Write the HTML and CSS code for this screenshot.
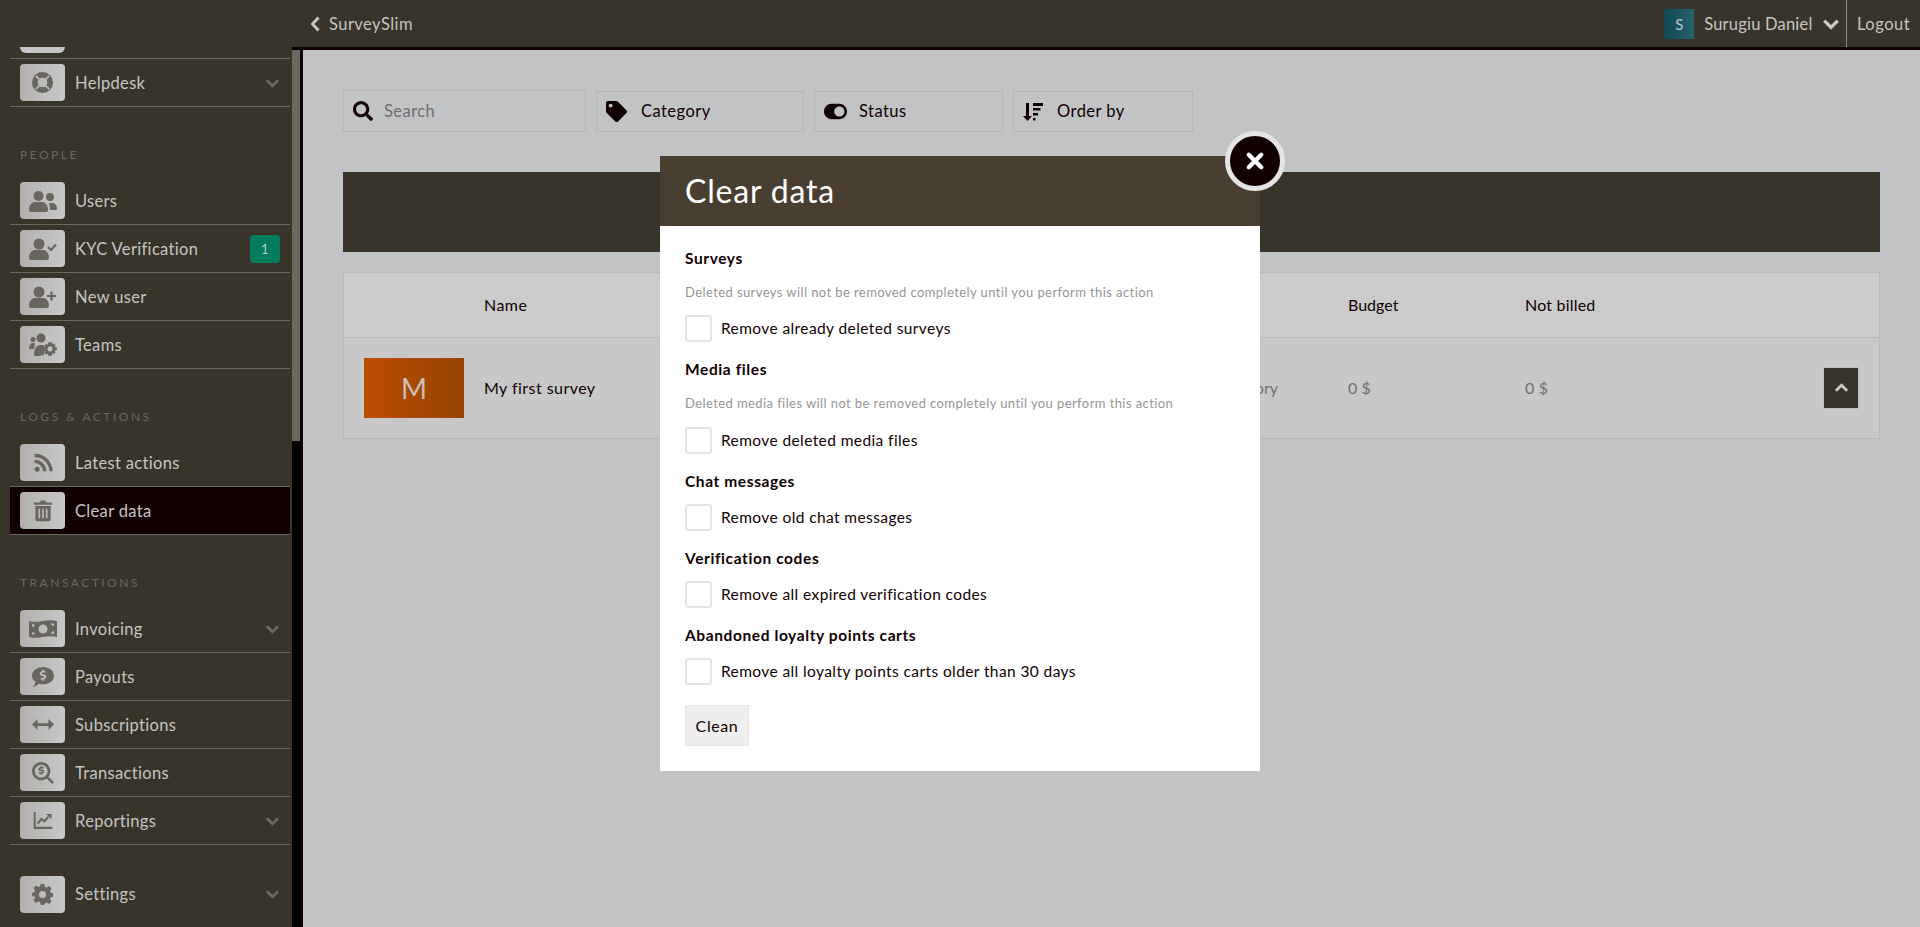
FILE: index.html
```html
<!DOCTYPE html>
<html lang="en">
<head>
<meta charset="utf-8">
<title>SurveySlim</title>
<link rel="stylesheet" href="styles.css">
</head>
<body>
<svg class="sprite" aria-hidden="true">
  <symbol id="chev" viewBox="0 0 16 10"><path d="M2 2l6 6 6-6" fill="none" stroke="currentColor" stroke-width="3"/></symbol>
  <symbol id="chevleft" viewBox="0 0 10 16"><path d="M8.500 1.500L2.500 8l6 6.500" fill="none" stroke="currentColor" stroke-width="3"/></symbol>
  <symbol id="search" viewBox="0 0 512 512"><path d="M505 442.7L405.3 343c-4.5-4.5-10.6-7-17-7H372c27.6-35.3 44-79.7 44-128C416 93.1 322.9 0 208 0S0 93.1 0 208s93.1 208 208 208c48.3 0 92.7-16.4 128-44v16.3c0 6.4 2.5 12.5 7 17l99.7 99.7c9.4 9.4 24.6 9.4 33.9 0l28.3-28.3c9.4-9.4 9.4-24.6.1-34zM208 336c-70.7 0-128-57.2-128-128 0-70.7 57.2-128 128-128 70.7 0 128 57.2 128 128 0 70.7-57.2 128-128 128z"/></symbol>
  <symbol id="tag" viewBox="0 0 512 512"><path d="M0 252.118V48C0 21.49 21.49 0 48 0h204.118a48 48 0 0 1 33.941 14.059l211.882 211.882c18.745 18.745 18.745 49.137 0 67.882L293.823 497.941c-18.745 18.745-49.137 18.745-67.882 0L14.059 286.059A48 48 0 0 1 0 252.118zM112 64c-26.51 0-48 21.49-48 48s21.49 48 48 48 48-21.49 48-48-21.49-48-48-48z"/></symbol>
  <symbol id="toggle" viewBox="0 0 576 512"><path d="M384 64H192C86 64 0 150 0 256s86 192 192 192h192c106 0 192-86 192-192S490 64 384 64zm0 320c-70.8 0-128-57.3-128-128 0-70.8 57.3-128 128-128 70.8 0 128 57.3 128 128 0 70.8-57.3 128-128 128z"/></symbol>
  <symbol id="sort" viewBox="0 0 20 18"><path d="M3 0h3v13h3l-4.500 5L0 13h3zM10 0h10v3H10zM10 5h7.500v2.500H10zM10 10h5v2.500h-5zM10 15h2.500v2.500H10z"/></symbol>
  <symbol id="lifering" viewBox="0 0 24 24"><path fill-rule="evenodd" d="M12 1a11 11 0 1 0 0 22 11 11 0 0 0 0-22zM12 7a5 5 0 1 1 0 10 5 5 0 0 1 0-10z"/><path d="M5 5l3.500 3.500M19 5l-3.500 3.500M5 19l3.500-3.500M19 19l-3.500-3.500" fill="none" stroke="#bdbdbc" stroke-width="1.800"/></symbol>
  <symbol id="users" viewBox="0 0 28 22"><circle cx="9.500" cy="6" r="5"/><path d="M0 20c0-5 3-8 6-8h7c3 0 6 3 6 8 0 1-1 2-2 2H2c-1 0-2-1-2-2z"/><circle cx="21" cy="7" r="4"/><path d="M20 13h3c3 0 5 2 5 5.500 0 1-.5 1.500-1.500 1.500H21c0-3-.5-5-1-7z"/></symbol>
  <symbol id="ucheck" viewBox="0 0 28 22"><circle cx="10" cy="6" r="5.500"/><path d="M0 20c0-5 3-8 6-8h8c3 0 6 3 6 8 0 1-1 2-2 2H2c-1 0-2-1-2-2z"/><path d="M19 9l3 3 5-5.500" fill="none" stroke="currentColor" stroke-width="2.200"/></symbol>
  <symbol id="uplus" viewBox="0 0 28 22"><circle cx="10" cy="6" r="5.500"/><path d="M0 20c0-5 3-8 6-8h8c3 0 6 3 6 8 0 1-1 2-2 2H2c-1 0-2-1-2-2z"/><path d="M18 10h9M22.500 5.500v9" fill="none" stroke="currentColor" stroke-width="2.200"/></symbol>
  <symbol id="teams" viewBox="0 0 28 24"><circle cx="12" cy="5" r="4.500"/><circle cx="4" cy="6.500" r="2.500"/><path d="M0 15c0-3 2-5 4-5h2l-1 6H1c-.5 0-1-.5-1-1zM5 21c0-5 3-9 6-9h3c1 1 2 2 2 3l-1 7c-3 1-7 1-9 1-.5 0-1-1-1-2z"/><path fill-rule="evenodd" d="M21 9l2 .5.300 1.700 1.700-.7 1.500 1.700-1 1.500 2.500 1v2l-2.500 1 1 1.500-1.500 1.700-1.700-.7L23 22.500l-2 .5-2-.5-.300-1.800-1.700.7-1.500-1.700 1-1.500-2.500-1v-2l2.500-1-1-1.500 1.500-1.700 1.700.7.300-1.700zM21 13.500a2.500 2.500 0 1 0 0 5 2.500 2.500 0 0 0 0-5z"/></symbol>
  <symbol id="rss" viewBox="0 0 24 24"><circle cx="5" cy="19.500" r="3"/><path d="M2 10a12 12 0 0 1 12 12M2 3a19 19 0 0 1 19.500 19" fill="none" stroke="currentColor" stroke-width="4"/></symbol>
  <symbol id="trash" viewBox="0 0 20 24"><path fill-rule="evenodd" d="M0 3h6.500l1-2h5l1 2H20v2.500H0zM1.500 7h17v15a2 2 0 0 1-2 2h-13a2 2 0 0 1-2-2zM5 10v10.500h1.800V10zM9.100 10v10.500h1.800V10zM13.200 10v10.500H15V10z"/></symbol>
  <symbol id="money" viewBox="0 0 28 22"><path fill-rule="evenodd" d="M0 3c9 3 18-3 28 0v16c-10-3-19 3-28 0zM14 6.500a4.500 4.500 0 1 0 0 9 4.500 4.500 0 0 0 0-9zM3 6v3a3 3 0 0 0 3-2.500zM25 16v-3a3 3 0 0 0-3 2.500zM3 16.500c1 0 2.500 0 3 .2A3 3 0 0 0 3 14zM25 5.500c-1 0-2.500 0-3-.2a3 3 0 0 0 3 2.700z"/></symbol>
  <symbol id="payout" viewBox="0 0 24 24"><path fill-rule="evenodd" d="M12 1c6.500 0 12 4 12 9.500S18.500 20 12 20c-1.500 0-3-.2-4.500-.7C6 21 3 22.500 1 22.500c1-1 2.500-3 3-5C1.500 15.500 0 13 0 10.500 0 5 5.500 1 12 1zM11 4v1.500C9.500 6 8.500 7 8.500 8.300c0 1.500 1 2.300 2.500 2.700l1.500.4c.6.200.9.500.9.900 0 .5-.5.800-1.100.8H9.500v1.700H11V16h2v-1.300c1.500-.4 2.500-1.400 2.500-2.700 0-1.500-1-2.300-2.500-2.700l-1.500-.4c-.6-.2-.9-.5-.9-.9 0-.5.500-.8 1.100-.8h2.800V5.500H13V4z"/></symbol>
  <symbol id="arrows" viewBox="0 0 24 12"><path d="M6 0v4.500h12V0l6 6-6 6V7.500H6V12L0 6z"/></symbol>
  <symbol id="searchd" viewBox="0 0 24 24"><path fill-rule="evenodd" d="M10 0a10 10 0 0 1 8 16l6 6-2 2-6-6a10 10 0 1 1-6-18zM10 3a7 7 0 1 0 0 14 7 7 0 0 0 0-14z"/><path d="M9 4.500h2v1h1.800v1.700H9.500c-.3 0-.5.200-.5.500s.2.500.5.500h1.500c1.300 0 2.200 1 2.200 2.200 0 1-.7 1.800-2.200 2.100v1H9v-1H7.200v-1.700h3.300c.3 0 .5-.2.500-.5s-.2-.5-.5-.5H9c-1.300 0-2.200-1-2.200-2.200 0-1 .7-1.700 2.200-2z"/></symbol>
  <symbol id="chart" viewBox="0 0 24 22"><path d="M0 0h2.500v19H24v3H0z"/><path d="M5 15l5-6 4 3 5-6" fill="none" stroke="currentColor" stroke-width="2.800"/><path d="M16 2.500h7v7z"/></symbol>
  <symbol id="cog" viewBox="0 0 24 24"><path fill-rule="evenodd" d="M10 0h4l.7 3.300 2 .8 2.800-1.800 2.800 2.800-1.800 2.800.8 2 3 .7v4l-3 .7-.8 2 1.800 2.800-2.800 2.800-2.800-1.800-2 .8L14 24h-4l-.7-3.300-2-.8-2.800 1.800-2.800-2.800 1.800-2.800-.8-2L0 14v-4l2.700-.7.800-2-1.800-2.800 2.800-2.800 2.800 1.800 2-.8zM12 8a4 4 0 1 0 0 8 4 4 0 0 0 0-8z"/></symbol>
</svg>

<header class="topbar">
  <a class="back"><svg class="back-icon"><use href="#chevleft"/></svg>SurveySlim</a>
  <div class="account">
    <span class="avatar">S</span>
    <span class="account-name">Surugiu Daniel</span>
    <svg class="account-chev"><use href="#chev"/></svg>
  </div>
  <a class="logout">Logout</a>
</header>

<div class="shell">
  <aside class="sidebar">
    <div class="nav-clip"><span class="nav-clip-icon"></span></div>
    <a class="nav-item"><span class="nav-icon"><svg class="i-lifering"><use href="#lifering"/></svg></span><span class="nav-text">Helpdesk</span><svg class="nav-chev"><use href="#chev"/></svg></a>

    <h4 class="nav-title">PEOPLE</h4>
    <a class="nav-item"><span class="nav-icon"><svg class="i-user"><use href="#users"/></svg></span><span class="nav-text">Users</span></a>
    <a class="nav-item"><span class="nav-icon"><svg class="i-user"><use href="#ucheck"/></svg></span><span class="nav-text">KYC Verification</span><span class="badge">1</span></a>
    <a class="nav-item"><span class="nav-icon"><svg class="i-user"><use href="#uplus"/></svg></span><span class="nav-text">New user</span></a>
    <a class="nav-item"><span class="nav-icon"><svg class="i-teams"><use href="#teams"/></svg></span><span class="nav-text">Teams</span></a>

    <h4 class="nav-title">LOGS &amp; ACTIONS</h4>
    <a class="nav-item"><span class="nav-icon"><svg class="i-rss"><use href="#rss"/></svg></span><span class="nav-text">Latest actions</span></a>
    <a class="nav-item is-active"><span class="nav-icon"><svg class="i-trash"><use href="#trash"/></svg></span><span class="nav-text">Clear data</span></a>

    <h4 class="nav-title">TRANSACTIONS</h4>
    <a class="nav-item"><span class="nav-icon"><svg class="i-user"><use href="#money"/></svg></span><span class="nav-text">Invoicing</span><svg class="nav-chev"><use href="#chev"/></svg></a>
    <a class="nav-item"><span class="nav-icon"><svg class="i-pay"><use href="#payout"/></svg></span><span class="nav-text">Payouts</span></a>
    <a class="nav-item"><span class="nav-icon"><svg class="i-arrows"><use href="#arrows"/></svg></span><span class="nav-text">Subscriptions</span></a>
    <a class="nav-item"><span class="nav-icon"><svg class="i-pay"><use href="#searchd"/></svg></span><span class="nav-text">Transactions</span></a>
    <a class="nav-item"><span class="nav-icon"><svg class="i-chart"><use href="#chart"/></svg></span><span class="nav-text">Reportings</span><svg class="nav-chev"><use href="#chev"/></svg></a>
    <a class="nav-item nav-settings"><span class="nav-icon"><svg class="i-cog"><use href="#cog"/></svg></span><span class="nav-text">Settings</span><svg class="nav-chev"><use href="#chev"/></svg></a>
  </aside>

  <div class="scrollbar"><div class="scroll-thumb"></div></div>

  <main class="main">
    <div class="filters">
      <div class="filter filter-search"><svg class="f-search"><use href="#search"/></svg><span class="placeholder">Search</span></div>
      <div class="filter filter-cat"><svg class="f-tag"><use href="#tag"/></svg><span>Category</span></div>
      <div class="filter filter-status"><svg class="f-toggle"><use href="#toggle"/></svg><span>Status</span></div>
      <div class="filter filter-order"><svg class="f-sort"><use href="#sort"/></svg><span>Order by</span></div>
    </div>
    <div class="band"></div>
    <div class="table">
      <div class="row row-head">
        <span class="c-thumb"></span><span class="c-name">Name</span><span class="c-cat"></span><span class="c-budget">Budget</span><span class="c-bill">Not billed</span>
      </div>
      <div class="row row-body">
        <span class="c-thumb"><span class="thumb">M</span></span>
        <span class="c-name">My first survey</span>
        <span class="c-cat muted">Category</span>
        <span class="c-budget muted">0 $</span>
        <span class="c-bill muted">0 $</span>
        <button class="row-btn"><svg class="row-chev"><use href="#chev"/></svg></button>
      </div>
    </div>
  </main>
</div>

<section class="modal">
  <h2 class="modal-title">Clear data</h2>
  <a class="modal-close"><svg viewBox="0 0 16 16" class="close-x"><path d="M3 3l10 10M13 3L3 13"/></svg></a>
  <form class="modal-body">
    <h5 class="g-title">Surveys</h5>
    <p class="g-desc">Deleted surveys will not be removed completely until you perform this action</p>
    <label class="check"><span class="box"></span>Remove already deleted surveys</label>
    <h5 class="g-title">Media files</h5>
    <p class="g-desc">Deleted media files will not be removed completely until you perform this action</p>
    <label class="check"><span class="box"></span>Remove deleted media files</label>
    <h5 class="g-title">Chat messages</h5>
    <label class="check"><span class="box"></span>Remove old chat messages</label>
    <h5 class="g-title">Verification codes</h5>
    <label class="check"><span class="box"></span>Remove all expired verification codes</label>
    <h5 class="g-title">Abandoned loyalty points carts</h5>
    <label class="check"><span class="box"></span>Remove all loyalty points carts older than 30 days</label>
    <button class="clean" type="button">Clean</button>
  </form>
</section>
</body>
</html>
```
FILE: styles.css
```css
* { box-sizing: border-box; }
html, body { margin: 0; height: 100%; overflow: hidden; }
body { font-family: Lato, "Noto Sans", sans-serif; font-size: 16px; background: #c2c3c5; color: #100002; display: flex; flex-direction: column; }
.sprite { display: none; }
svg { fill: currentColor; display: block; flex: none; }

.topbar { height: 47px; flex: none; background: #38342a; color: #c5c4c1; display: flex; align-items: center; padding-left: 310px; font-size: 16.500px; }
.back { display: flex; align-items: center; gap: 9px; margin-right: auto; letter-spacing: .45px; }
.back-icon { width: 10px; height: 16px; }
.account { display: flex; align-items: center; height: 47px; }
.avatar { width: 30px; height: 30px; background: linear-gradient(90deg, #0e4655, #27646e); color: #bfc5c5; display: flex; align-items: center; justify-content: center; font-size: 15px; }
.account-name { margin-left: 10px; letter-spacing: .2px; }
.account-chev { width: 18px; height: 12px; margin: 0 6.500px 0 9px; color: #c9c8c5; }
.logout { height: 47px; border-left: 1px solid #8c8b86; display: flex; align-items: center; width: 74px; padding-left: 10px; letter-spacing: .5px; }

.shell { flex: 1; display: flex; min-height: 0; }
.sidebar { width: 292px; flex: none; background: #38342a; padding: 0 2px 0 10px; overflow: hidden; color: #c5c4c1; }
.scrollbar { width: 8px; flex: none; background: #000; }
.scroll-thumb { height: 391px; margin-top: 3px; background: #6b6860; }
.nav-clip { height: 12px; border-bottom: 1px solid #6b6860; padding-left: 10px; }
.nav-clip-icon { display: block; width: 45px; height: 6px; background: #c5c5c5; border-radius: 0 0 6px 6px; }
.nav-item { height: 48px; display: flex; align-items: center; padding: 0 10px; border-bottom: 1px solid #6b6860; font-size: 16.500px; letter-spacing: .33px; }
.nav-icon { width: 45px; height: 37px; border-radius: 4px; background: linear-gradient(90deg, #b1b0ae, #c8c8c8); color: #696660; display: flex; align-items: center; justify-content: center; flex: none; }
.nav-text { margin-left: 10px; flex: 1; }
.nav-chev { width: 15px; height: 10px; color: #6b6860; }
.is-active { background: #100002; }
.nav-settings { border-bottom: 0; margin-top: 25px; }
.badge { width: 30px; height: 28px; background: #017d5e; color: #c5c9c5; border-radius: 4px; display: flex; align-items: center; justify-content: center; font-size: 13px; }
.nav-title { margin: 0; height: 70px; padding: 40px 0 0 10px; font-size: 12px; line-height: 16px; font-weight: 400; letter-spacing: 2.500px; color: #6b6860; }
.i-lifering { width: 23px; height: 23px; }
.i-user { width: 28px; height: 22px; }
.i-teams { width: 28px; height: 24px; }
.i-rss { width: 20px; height: 20px; }
.i-trash { width: 18px; height: 23px; }
.i-pay { width: 22px; height: 22px; }
.i-arrows { width: 22px; height: 11px; }
.i-chart { width: 22px; height: 17px; }
.i-cog { width: 21px; height: 21px; }

.main { flex: 1; min-width: 0; border-top: 3px solid #100002; border-left: 3px solid #100002; padding: 40px 40px 0; }
.filters { display: flex; gap: 10px; height: 42px; align-items: flex-end; }
.filter { height: 41px; border: 1px solid #b5b6b8; display: flex; align-items: center; font-size: 16.500px; letter-spacing: .45px; }
.filter span { margin-bottom: 2px; }
.filter .placeholder { margin-bottom: 0; color: #6f6f70; }
.filter-search { width: 243px; height: 42px; padding-left: 9px; }
.filter-cat { width: 208px; padding-left: 9px; }
.filter-status { width: 189px; padding-left: 9px; }
.filter-order { width: 180px; padding-left: 9px; }
.f-search { width: 20px; height: 20px; margin-right: 11px; }
.f-tag { width: 21px; height: 21px; margin-right: 14px; }
.f-toggle { width: 23px; height: 21px; margin-right: 12px; }
.f-sort { width: 20px; height: 18px; margin-right: 14px; }

.band { height: 80px; margin-top: 40px; background: #38342a; }
.table { margin-top: 20px; border: 1px solid #b8b9ba; background: #c8c8c8; }
.row { display: flex; align-items: center; position: relative; }
.row-head { height: 65px; background: #cbcbcb; border-bottom: 1px solid #b8b9ba; }
.row-body { height: 100px; }
.c-thumb { width: 140px; padding-left: 20px; flex: none; }
.c-name { width: 680px; flex: none; letter-spacing: .45px; margin-bottom: 2px; }
.c-cat { width: 184px; flex: none; padding-left: 50px; margin-bottom: 2px; }
.c-budget { width: 177px; flex: none; margin-bottom: 2px; }
.c-bill { flex: none; letter-spacing: .2px; margin-bottom: 2px; }
.muted { color: #6f6f70; }
.thumb { display: flex; align-items: center; justify-content: center; width: 100px; height: 60px; background: linear-gradient(90deg, #bb4e00, #944302); color: #c8c0b8; font-size: 28px; }
.row-btn { position: absolute; right: 20px; top: 29px; width: 36px; height: 42px; padding: 0; background: #38342a; border: 1px solid #bcbcbc; color: #c8c8c8; display: flex; align-items: center; justify-content: center; }
.row-chev { width: 15px; height: 10px; transform: rotate(180deg); }

.modal { position: fixed; left: 660px; top: 156px; width: 600px; height: 615px; background: #fff; color: #100002; }
.modal-title { margin: 0; height: 70px; background: #493f31; color: #fff; font-size: 32px; font-weight: 400; line-height: 70px; padding-left: 25px; letter-spacing: .8px; }
.modal-close { position: absolute; right: -25px; top: -25px; width: 60px; height: 60px; border: 5px solid #e5e5e5; border-radius: 50%; background: #100002; display: flex; align-items: center; justify-content: center; }
.close-x { width: 20px; height: 20px; fill: none; stroke: #fff; stroke-width: 3.500; stroke-linecap: round; }
.modal-body { padding: 22px 25px 0; display: flex; flex-direction: column; align-items: flex-start; }
.g-title { margin: 0; font-size: 15.500px; line-height: 20px; font-weight: 700; letter-spacing: .6px; }
.g-desc { margin: 14px 0 0; font-size: 13px; line-height: 20px; color: #969696; letter-spacing: .41px; }
.g-title + .check { margin-top: 13px; }
.g-desc + .check { margin-top: 13.300px; }
.check { display: flex; align-items: flex-start; height: 27px; line-height: 26px; font-size: 15.500px; letter-spacing: .4px; margin-bottom: 17.200px; }
.box { width: 27px; height: 27px; border: 2px solid #e4e4e4; border-radius: 3px; margin-right: 9px; background: #fff; }
.clean { margin-top: 2.400px; width: 64px; height: 41px; background: #eee; border: 1px solid #e6e6e6; font: inherit; color: inherit; padding: 0; letter-spacing: .6px; }
```
